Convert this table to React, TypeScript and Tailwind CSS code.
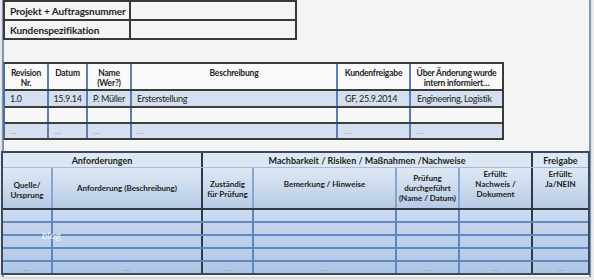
import React from "react";

const revW = ["w-[44px]", "w-[39px]", "w-[44px]", "w-[206px]", "w-[73px]", "w-[91px]"];
const revBorder = "border-r-2 border-[#5a7fb3]";

function RevRow({
  cells,
  cls,
  cellCls,
}: {
  cells: React.ReactNode[];
  cls: string;
  cellCls: string[];
}) {
  return (
    <div className={`flex ${cls}`}>
      {cells.map((c, i) => (
        <div key={i} className={`${revW[i]} ${i < 5 ? revBorder : ""} ${cellCls[i]} h-full`}>
          {c}
        </div>
      ))}
    </div>
  );
}

const botW = ["w-[50px]", "w-[150px]", "w-[51px]", "w-[143px]", "w-[63px]", "w-[73px]", "flex-1"];
const botB = [
  "border-r-2 border-[#5d85bf]",
  "border-r-2 border-[#2f3946]",
  "border-r-2 border-[#5d85bf]",
  "border-r-2 border-[#5d85bf]",
  "border-r-2 border-[#5d85bf]",
  "border-r-2 border-[#2f3946]",
  "",
];

function Dots() {
  return <span className="text-[#8a8a8a] text-[8px] tracking-[0.5px] font-normal">...</span>;
}

export default function App() {
  const dataRows = [0, 1, 2, 3, 4];
  return (
    <div className="w-[594px] h-[280px] bg-[#ebebeb] overflow-hidden font-['Lato','Open_Sans',sans-serif] text-[#222]">
      <div className="ml-[2px] w-[589px] h-[277px] border-x-2 border-[#7d97bb] bg-[#f4f4f4] flex flex-col shadow-[0_1px_2px_rgba(0,0,0,0.15)]">
        {/* top table */}
        <div className="-ml-px w-[294px] border-2 border-[#383838] text-[10px] tracking-[-0.1px] font-bold leading-none">
          <div className="flex h-[19px] border-b-2 border-[#383838]">
            <div className="w-[126px] border-r-2 border-[#383838] pl-[5px] flex items-center whitespace-nowrap">
              Projekt + Auftragsnummer
            </div>
            <div className="flex-1" />
          </div>
          <div className="flex h-[17px]">
            <div className="w-[126px] border-r-2 border-[#383838] pl-[5px] flex items-center">
              Kundenspezifikation
            </div>
            <div className="flex-1" />
          </div>
        </div>

        {/* revision table */}
        <div className="-ml-px mt-[22px] w-[501px] border-y-2 border-r-2 border-[#3a3a3a] border-l-2 border-l-[#4d6f9c] text-[8.5px]">
          <RevRow
            cls="h-[27px] border-b-2 border-[#3a3a3a] bg-[#fafafa] font-bold leading-[10px] text-center tracking-[-0.2px]"
            cellCls={["pt-[4px]", "pt-[4px]", "pt-[4px]", "pt-[4px]", "pt-[4px]", "pt-[4px]"]}
            cells={[
              <>Revision<br />Nr.</>,
              "Datum",
              <>Name<br />(Wer?)</>,
              "Beschreibung",
              "Kundenfreigabe",
              <>Über Änderung wurde<br />intern informiert…</>,
            ]}
          />
          <RevRow
            cls="h-[17px] border-b-2 border-[#3f3f3f] bg-[#d4dff0] leading-none text-[9px] tracking-[-0.3px]"
            cellCls={[
              "pl-[5px] flex items-center",
              "flex items-center justify-center",
              "flex items-center justify-center",
              "pl-[5px] flex items-center",
              "pl-[7px] flex items-center",
              "pl-[6px] flex items-center",
            ]}
            cells={["1.0", "15.9.14", "P. Müller", "Ersterstellung", "GF, 25.9.2014", "Engineering, Logistik"]}
          />
          <RevRow
            cls="h-[16px] border-b-2 border-[#3f3f3f] bg-[#f8f8f8]"
            cellCls={["", "", "", "", "", ""]}
            cells={["", "", "", "", "", ""]}
          />
          <RevRow
            cls="h-[14px] bg-[#d4dff0] leading-none"
            cellCls={[
              "pl-[5px] flex items-center",
              "pl-[5px] flex items-center",
              "pl-[5px] flex items-center",
              "pl-[5px] flex items-center",
              "pl-[7px] flex items-center",
              "pl-[6px] flex items-center",
            ]}
            cells={[<Dots />, <Dots />, <Dots />, <Dots />, <Dots />, <Dots />]}
          />
        </div>

        {/* requirements table */}
        <div className="relative -ml-[3px] mt-[11px] w-[589px] border-2 border-[#3a4a60] text-[8px] leading-[10px] font-bold">
          <div className="flex h-[15px] border-b border-[#a3bcdd] bg-[#dde7f3] text-[9px] leading-none">
            <div className="w-[200px] border-r-2 border-[#2f3946] flex items-center justify-center">Anforderungen</div>
            <div className="w-[330px] border-r-2 border-[#2f3946] flex items-center justify-center">
              Machbarkeit / Risiken / Maßnahmen /Nachweise
            </div>
            <div className="flex-1 flex items-center justify-center">Freigabe</div>
          </div>
          <div className="flex h-[42px] border-b-2 border-[#2f3946] bg-linear-to-b from-[#dfe8f4] to-[#b7cbe5] text-center">
            <div className={`${botW[0]} border-r-2 border-[#86a6d2] flex items-center justify-center pt-[4px]`}>
              Quelle/<br />Ursprung
            </div>
            <div className={`${botW[1]} ${botB[1]} flex items-center justify-center`}>
              Anforderung (Beschreibung)
            </div>
            <div className={`${botW[2]} border-r-2 border-[#86a6d2] flex items-center justify-center pt-[2px]`}>
              Zuständig<br />für Prüfung
            </div>
            <div className={`${botW[3]} border-r-2 border-[#86a6d2] flex items-center justify-center pb-[8px]`}>
              Bemerkung / Hinweise
            </div>
            <div className={`${botW[4]} border-r-2 border-[#86a6d2] flex items-center justify-center whitespace-nowrap`}>
              Prüfung<br />durchgeführt<br />(Name / Datum)
            </div>
            <div className={`${botW[5]} ${botB[5]} pt-[1px]`}>
              Erfüllt:<br />Nachweis /<br />Dokument
            </div>
            <div className={`${botW[6]} pt-[1px]`}>
              Erfüllt:<br />Ja/NEIN
            </div>
          </div>
          <div className="bg-linear-to-b from-[#cbdaef] to-[#aec6e6] font-normal">
            {dataRows.map((r) => (
              <div
                key={r}
                className={`flex ${r < 4 ? "h-[13px] border-b-2 border-[#6089c2]" : "h-[11px]"}`}
              >
                {botW.map((w, i) => (
                  <div key={i} className={`${w} ${botB[i]} h-full flex items-center justify-center leading-none`}>
                    {r === 4 ? <Dots /> : null}
                  </div>
                ))}
              </div>
            ))}
          </div>
          <span className="absolute left-[39px] top-[77px] text-[10px] font-normal leading-none text-white/80">
            blog
          </span>
        </div>
      </div>
    </div>
  );
}
